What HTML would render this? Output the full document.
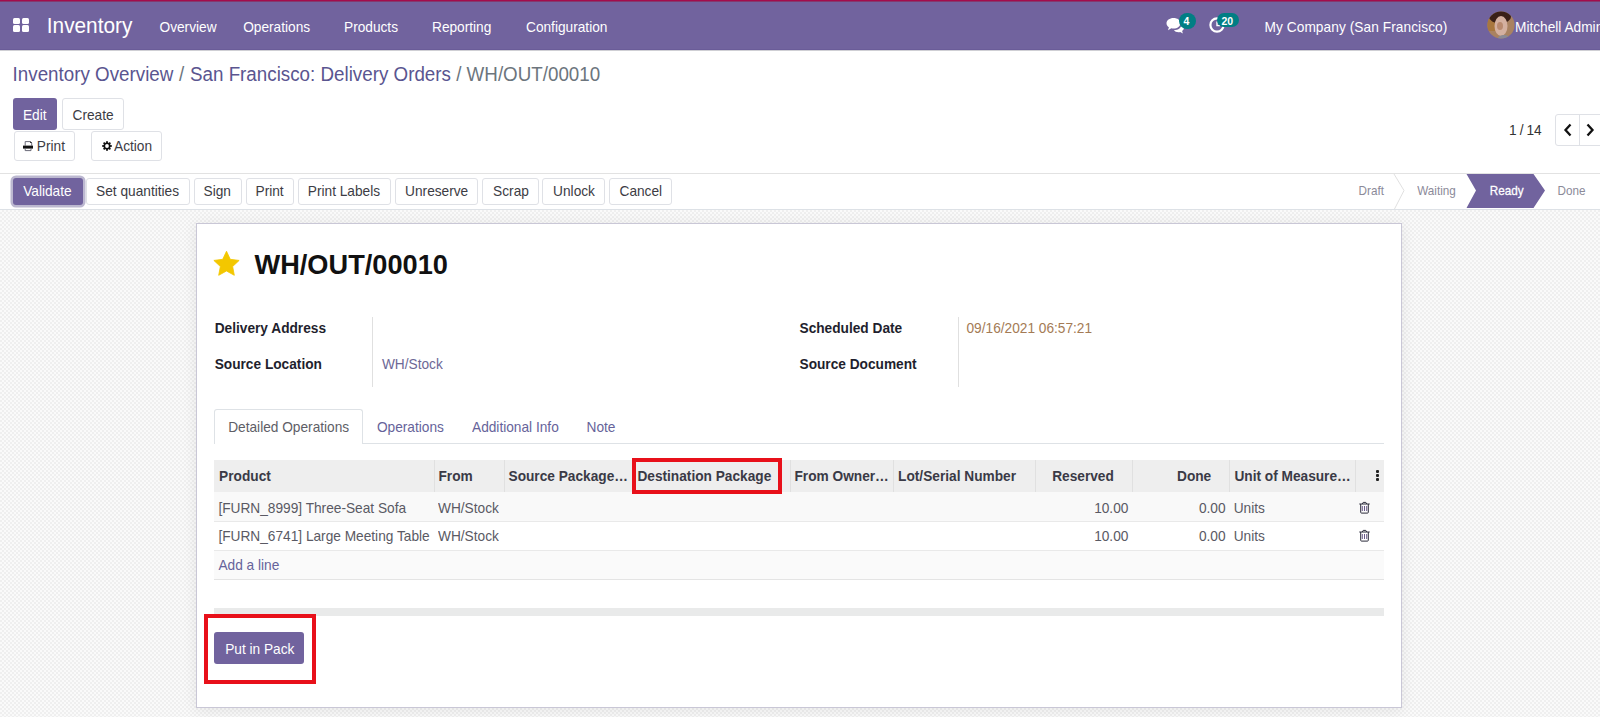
<!DOCTYPE html>
<html><head><meta charset="utf-8">
<style>
*{box-sizing:border-box;margin:0;padding:0}
html,body{width:1600px;height:717px;overflow:hidden;background:#fff;font-family:"Liberation Sans",sans-serif;font-size:14px;color:#212529}
.abs{position:absolute}
.t{position:absolute;white-space:nowrap;line-height:1}
</style></head><body>
<div class="abs" style="left:0px;top:0px;width:1600px;height:50px;background:#71639e"></div>
<div class="abs" style="left:0px;top:0px;width:1600px;height:1px;background:#a30c4c"></div>
<div class="abs" style="left:0px;top:1px;width:1600px;height:1px;background:#84396e"></div>
<div class="abs" style="left:0px;top:49px;width:1600px;height:1px;background:#6a5c98"></div>
<div class="abs" style="left:0px;top:50px;width:1600px;height:1px;background:#cfcfd4"></div>
<div class="abs" style="left:12.5px;top:17.7px;width:7.6px;height:6.6px;background:#fff;border-radius:1.5px"></div>
<div class="abs" style="left:21.8px;top:17.7px;width:7.6px;height:6.6px;background:#fff;border-radius:1.5px"></div>
<div class="abs" style="left:12.5px;top:25px;width:7.6px;height:6.6px;background:#fff;border-radius:1.5px"></div>
<div class="abs" style="left:21.8px;top:25px;width:7.6px;height:6.6px;background:#fff;border-radius:1.5px"></div>
<div class="t" style="left:46.8px;top:16.29px;font-size:20.8px;color:#fff;transform-origin:0 17.61px;;transform:scaleY(1.035)">Inventory</div>
<div class="t" style="left:159.5px;top:20.50px;font-size:13.7px;color:#fff;transform-origin:0 11.60px;;transform:scaleY(1.12)">Overview</div>
<div class="t" style="left:243.2px;top:20.50px;font-size:13.7px;color:#fff;transform-origin:0 11.60px;;transform:scaleY(1.12)">Operations</div>
<div class="t" style="left:344.0px;top:20.50px;font-size:13.7px;color:#fff;transform-origin:0 11.60px;;transform:scaleY(1.12)">Products</div>
<div class="t" style="left:432.0px;top:20.50px;font-size:13.7px;color:#fff;transform-origin:0 11.60px;;transform:scaleY(1.12)">Reporting</div>
<div class="t" style="left:526.0px;top:20.50px;font-size:13.7px;color:#fff;transform-origin:0 11.60px;;transform:scaleY(1.12)">Configuration</div>
<div class="t" style="left:1264.5px;top:20.50px;font-size:13.7px;color:#fff;transform-origin:0 11.60px;letter-spacing:.07px;transform:scaleY(1.12)">My Company (San Francisco)</div>
<div class="t" style="left:1515px;top:20.50px;font-size:13.7px;color:#fff;transform-origin:0 11.60px;;transform:scaleY(1.12)">Mitchell Admin</div>
<svg class="abs" style="left:1487px;top:10.5px" width="28" height="28" viewBox="0 0 28 28"><defs><clipPath id="av"><circle cx="14" cy="14" r="13.6"/></clipPath></defs><g clip-path="url(#av)"><rect width="28" height="28" fill="#a98261"/><rect x="0" y="8" width="9" height="12" fill="#a8773e"/><ellipse cx="13" cy="6" rx="11" ry="6.5" fill="#3a2018"/><ellipse cx="14" cy="15" rx="6.5" ry="10" fill="#d4b0a0"/><ellipse cx="13" cy="15" rx="3" ry="4" fill="#b98a70"/><ellipse cx="17" cy="27" rx="6" ry="3" fill="#8a8a95"/></g></svg>
<svg class="abs" style="left:1166px;top:17px" width="19" height="17" viewBox="0 0 19 17"><path d="M7.5 1C3.6 1 .5 3.3 .5 6.2c0 1.6.9 3 2.4 4L2 13.2l3.3-2c.7.2 1.4.3 2.2.3 3.9 0 7-2.3 7-5.3S11.4 1 7.5 1z" fill="#fff"/><path d="M15.5 7.5c0 3-3 5.6-7.6 5.7.9 1.2 2.6 2 4.6 2 .6 0 1.1-.1 1.7-.2l2.7 1.6-.8-2.6c1.2-.8 1.9-1.9 1.9-3.2 0-1.3-.9-2.5-2.3-3.3z" fill="#fff"/></svg>
<div class="abs" style="left:1179px;top:13.4px;width:17px;height:15.2px;border-radius:8px;background:#017e84"></div>
<div class="t" style="left:1183.5px;top:16.21px;font-size:10.5px;color:#fff;font-weight:bold;transform-origin:0 8.89px;;transform:scaleY(1.05)">4</div>
<svg class="abs" style="left:1209px;top:17px" width="16" height="16" viewBox="0 0 16 16"><circle cx="8" cy="8" r="6.6" fill="none" stroke="#fff" stroke-width="2.2"/><path d="M8 4.5V8.6H11" stroke="#fff" stroke-width="1.4" fill="none"/></svg>
<div class="abs" style="left:1217.4px;top:13.4px;width:21.3px;height:13.5px;border-radius:7px;background:#017e84"></div>
<div class="t" style="left:1221.5px;top:15.71px;font-size:10.5px;color:#fff;font-weight:bold;transform-origin:0 8.89px;;transform:scaleY(1.05)">20</div>
<div class="t" style="left:12.6px;top:65.89px;font-size:18.8px;color:#5a5590;transform-origin:0 15.91px;;transform:scaleY(1.04)">Inventory Overview<span style="color:#6c757d;padding:0 .5px"> / </span>San Francisco: Delivery Orders<span style="color:#6c757d"> / WH/OUT/00010</span></div>
<div class="abs" style="left:13px;top:98px;width:44px;height:32px;background:#71639e;border-radius:3px;"></div>
<div class="t" style="left:22.9px;top:108.70px;font-size:13.7px;color:#fff;transform-origin:0 11.60px;;transform:scaleY(1.12)">Edit</div>
<div class="abs" style="left:62.4px;top:98px;width:61.300000000000004px;height:32px;background:#fff;border:1px solid #dfe1e6;border-radius:3px;"></div>
<div class="t" style="left:72.5px;top:108.70px;font-size:13.7px;color:#3c3c44;transform-origin:0 11.60px;;transform:scaleY(1.12)">Create</div>
<div class="abs" style="left:13.5px;top:130.7px;width:61.0px;height:30.700000000000017px;background:#fff;border:1px solid #dfe1e6;border-radius:3px;"></div>
<svg class="abs" style="left:22px;top:140px" width="12" height="12" viewBox="0 0 12 12"><path d="M3.2 5.6V1.6h5.2l1.3 1.3v2.7" fill="none" stroke="#5a5a6a" stroke-width=".9"/><path d="M8.2 1.3l1.8 1.8h-1.8z" fill="#111"/><rect x="1" y="5.6" width="10" height="3" fill="#111"/><path d="M3.2 8.6v2h5.8v-2" fill="none" stroke="#5a5a6a" stroke-width=".9"/></svg>
<div class="t" style="left:36.8px;top:139.80px;font-size:13.7px;color:#3c3c44;transform-origin:0 11.60px;;transform:scaleY(1.12)">Print</div>
<div class="abs" style="left:91.3px;top:130.7px;width:71.2px;height:30.700000000000017px;background:#fff;border:1px solid #dfe1e6;border-radius:3px;"></div>
<svg class="abs" style="left:101.5px;top:141px" width="10" height="10" viewBox="-5 -5 10 10"><g fill="#111"><circle r="3.5"/><rect x="-.9" y="-4.8" width="1.8" height="9.6"/><rect x="-.9" y="-4.8" width="1.8" height="9.6" transform="rotate(45)"/><rect x="-.9" y="-4.8" width="1.8" height="9.6" transform="rotate(90)"/><rect x="-.9" y="-4.8" width="1.8" height="9.6" transform="rotate(135)"/></g><circle r="1.9" fill="#fff"/></svg>
<div class="t" style="left:114.0px;top:139.80px;font-size:13.7px;color:#3c3c44;transform-origin:0 11.60px;;transform:scaleY(1.12)">Action</div>
<div class="t" style="left:1509px;top:123.90px;font-size:13.7px;color:#333;transform-origin:0 11.60px;letter-spacing:-.35px;transform:scaleY(1.12)">1 / 14</div>
<div class="abs" style="left:1555px;top:114px;width:60px;height:32px;background:#fff;border:1px solid #dfe1e6;border-radius:3px"></div>
<div class="abs" style="left:1579px;top:114px;width:1px;height:32px;background:#dfe1e6"></div>
<svg class="abs" style="left:1563px;top:123px" width="10" height="14" viewBox="0 0 10 14"><path d="M7.5 1.5L2.5 7l5 5.5" fill="none" stroke="#111" stroke-width="2.3"/></svg>
<svg class="abs" style="left:1585px;top:123px" width="10" height="14" viewBox="0 0 10 14"><path d="M2.5 1.5L7.5 7l-5 5.5" fill="none" stroke="#111" stroke-width="2.3"/></svg>
<div class="abs" style="left:0px;top:173px;width:1600px;height:1px;background:#e2e2e2"></div>
<div class="abs" style="left:0px;top:209px;width:1600px;height:1px;background:#dde1e6"></div>
<div class="abs" style="left:13px;top:178px;width:70px;height:27px;background:#71639e;border-radius:3px;box-shadow:0 0 0 2.5px #bcb8d0"></div>
<div class="t" style="left:23.2px;top:185.00px;font-size:13.7px;color:#fff;transform-origin:0 11.60px;;transform:scaleY(1.12)">Validate</div>
<div class="abs" style="left:86px;top:178px;width:104px;height:27px;background:#fff;border:1px solid #dfe1e6;border-radius:3px;"></div>
<div class="t" style="left:96.1px;top:185.00px;font-size:13.7px;color:#3c3c44;transform-origin:0 11.60px;;transform:scaleY(1.12)">Set quantities</div>
<div class="abs" style="left:194px;top:178px;width:48px;height:27px;background:#fff;border:1px solid #dfe1e6;border-radius:3px;"></div>
<div class="t" style="left:203.5px;top:185.00px;font-size:13.7px;color:#3c3c44;transform-origin:0 11.60px;;transform:scaleY(1.12)">Sign</div>
<div class="abs" style="left:246px;top:178px;width:48px;height:27px;background:#fff;border:1px solid #dfe1e6;border-radius:3px;"></div>
<div class="t" style="left:255.5px;top:185.00px;font-size:13.7px;color:#3c3c44;transform-origin:0 11.60px;;transform:scaleY(1.12)">Print</div>
<div class="abs" style="left:298px;top:178px;width:93px;height:27px;background:#fff;border:1px solid #dfe1e6;border-radius:3px;"></div>
<div class="t" style="left:307.8px;top:185.00px;font-size:13.7px;color:#3c3c44;transform-origin:0 11.60px;;transform:scaleY(1.12)">Print Labels</div>
<div class="abs" style="left:395px;top:178px;width:83px;height:27px;background:#fff;border:1px solid #dfe1e6;border-radius:3px;"></div>
<div class="t" style="left:405.1px;top:185.00px;font-size:13.7px;color:#3c3c44;transform-origin:0 11.60px;;transform:scaleY(1.12)">Unreserve</div>
<div class="abs" style="left:482px;top:178px;width:57px;height:27px;background:#fff;border:1px solid #dfe1e6;border-radius:3px;"></div>
<div class="t" style="left:493.1px;top:185.00px;font-size:13.7px;color:#3c3c44;transform-origin:0 11.60px;;transform:scaleY(1.12)">Scrap</div>
<div class="abs" style="left:542px;top:178px;width:63px;height:27px;background:#fff;border:1px solid #dfe1e6;border-radius:3px;"></div>
<div class="t" style="left:553.1px;top:185.00px;font-size:13.7px;color:#3c3c44;transform-origin:0 11.60px;;transform:scaleY(1.12)">Unlock</div>
<div class="abs" style="left:609px;top:178px;width:63px;height:27px;background:#fff;border:1px solid #dfe1e6;border-radius:3px;"></div>
<div class="t" style="left:619.5px;top:185.00px;font-size:13.7px;color:#3c3c44;transform-origin:0 11.60px;;transform:scaleY(1.12)">Cancel</div>
<svg class="abs" style="left:1380px;top:174px" width="220" height="35" viewBox="0 0 220 35"><path d="M14 0L24 16.5L14.5 35" fill="none" stroke="#e0e0e0" stroke-width="1"/><path d="M86.5 0H153.5L165 16.5L153.5 34H86.5L96 16.5Z" fill="#71639e"/></svg>
<div class="t" style="left:1358.6px;top:184.80px;font-size:11.7px;color:#8b8a99;transform-origin:0 9.90px;;transform:scaleY(1.12)">Draft</div>
<div class="t" style="left:1417.2px;top:184.80px;font-size:11.7px;color:#8b8a99;transform-origin:0 9.90px;;transform:scaleY(1.12)">Waiting</div>
<div class="t" style="left:1489.8px;top:184.80px;font-size:11.7px;color:#fff;transform-origin:0 9.90px;-webkit-text-stroke:.25px #fff;transform:scaleY(1.12)">Ready</div>
<div class="t" style="left:1557.6px;top:184.80px;font-size:11.7px;color:#8b8a99;transform-origin:0 9.90px;;transform:scaleY(1.12)">Done</div>
<div class="abs" style="left:0px;top:210px;width:1600px;height:507px;background-color:#fafafa;background-image:linear-gradient(45deg,#efefef 25%,transparent 25%,transparent 75%,#efefef 75%),linear-gradient(45deg,#efefef 25%,transparent 25%,transparent 75%,#efefef 75%);background-size:4px 4px;background-position:0 0,2px 2px"></div>
<div class="abs" style="left:196px;top:223px;width:1206px;height:485px;background:#fff;border:1px solid #c9c7d6;box-shadow:0 2px 14px rgba(0,0,0,.08)"></div>
<svg class="abs" style="left:213.3px;top:249.8px" width="27" height="27" viewBox="0 0 26 26"><path d="M13.00 1.20L16.64 8.98L25.17 10.04L18.90 15.92L20.52 24.36L13.00 20.20L5.48 24.36L7.10 15.92L0.83 10.04L9.36 8.98Z" fill="#f3c700" stroke="#f3c700" stroke-width=".8" stroke-linejoin="round"/></svg>
<div class="t" style="left:254.5px;top:250.88px;font-size:27.2px;color:#111;font-weight:bold;">WH/OUT/00010</div>
<div class="t" style="left:214.7px;top:322.20px;font-size:13.7px;color:#1f1f2e;font-weight:bold;transform-origin:0 11.60px;;transform:scaleY(1.12)">Delivery Address</div>
<div class="t" style="left:214.7px;top:357.80px;font-size:13.7px;color:#1f1f2e;font-weight:bold;transform-origin:0 11.60px;;transform:scaleY(1.12)">Source Location</div>
<div class="abs" style="left:372px;top:317.4px;width:1px;height:70px;background:#e0e0e0"></div>
<div class="t" style="left:381.9px;top:357.80px;font-size:13.7px;color:#6d6896;transform-origin:0 11.60px;;transform:scaleY(1.12)">WH/Stock</div>
<div class="t" style="left:799.5px;top:322.20px;font-size:13.7px;color:#1f1f2e;font-weight:bold;transform-origin:0 11.60px;;transform:scaleY(1.12)">Scheduled Date</div>
<div class="t" style="left:799.5px;top:357.80px;font-size:13.7px;color:#1f1f2e;font-weight:bold;transform-origin:0 11.60px;;transform:scaleY(1.12)">Source Document</div>
<div class="abs" style="left:957.5px;top:317.4px;width:1px;height:70px;background:#e0e0e0"></div>
<div class="t" style="left:966.5px;top:322.20px;font-size:13.7px;color:#a47b55;transform-origin:0 11.60px;;transform:scaleY(1.12)">09/16/2021 06:57:21</div>
<div class="abs" style="left:214px;top:443px;width:1170px;height:1px;background:#dee2e6"></div>
<div class="abs" style="left:214px;top:409px;width:149px;height:35px;background:#fff;border:1px solid #dee2e6;border-bottom:none;border-radius:3px 3px 0 0"></div>
<div class="t" style="left:228.2px;top:420.70px;font-size:13.7px;color:#5e5e66;transform-origin:0 11.60px;;transform:scaleY(1.12)">Detailed Operations</div>
<div class="t" style="left:376.9px;top:420.70px;font-size:13.7px;color:#66639a;transform-origin:0 11.60px;;transform:scaleY(1.12)">Operations</div>
<div class="t" style="left:472px;top:420.70px;font-size:13.7px;color:#66639a;transform-origin:0 11.60px;;transform:scaleY(1.12)">Additional Info</div>
<div class="t" style="left:586.5px;top:420.70px;font-size:13.7px;color:#66639a;transform-origin:0 11.60px;;transform:scaleY(1.12)">Note</div>
<div class="abs" style="left:214px;top:460px;width:1170px;height:32px;background:#eeeeee"></div>
<div class="abs" style="left:434px;top:460px;width:1px;height:32px;background:#e0e0e0"></div>
<div class="abs" style="left:504px;top:460px;width:1px;height:32px;background:#e0e0e0"></div>
<div class="abs" style="left:632px;top:460px;width:1px;height:32px;background:#e0e0e0"></div>
<div class="abs" style="left:789.5px;top:460px;width:1px;height:32px;background:#e0e0e0"></div>
<div class="abs" style="left:893px;top:460px;width:1px;height:32px;background:#e0e0e0"></div>
<div class="abs" style="left:1035px;top:460px;width:1px;height:32px;background:#e0e0e0"></div>
<div class="abs" style="left:1132px;top:460px;width:1px;height:32px;background:#e0e0e0"></div>
<div class="abs" style="left:1229px;top:460px;width:1px;height:32px;background:#e0e0e0"></div>
<div class="abs" style="left:1355px;top:460px;width:1px;height:32px;background:#e0e0e0"></div>
<div class="t" style="left:219.1px;top:469.60px;font-size:13.7px;color:#3a3a46;font-weight:bold;transform-origin:0 11.60px;;transform:scaleY(1.12)">Product</div>
<div class="t" style="left:438.5px;top:469.60px;font-size:13.7px;color:#3a3a46;font-weight:bold;transform-origin:0 11.60px;;transform:scaleY(1.12)">From</div>
<div class="t" style="left:508.5px;top:469.60px;font-size:13.7px;color:#3a3a46;font-weight:bold;transform-origin:0 11.60px;;transform:scaleY(1.12)">Source Package…</div>
<div class="t" style="left:637.4px;top:469.60px;font-size:13.7px;color:#3a3a46;font-weight:bold;transform-origin:0 11.60px;;transform:scaleY(1.12)">Destination Package</div>
<div class="t" style="left:794.5px;top:469.60px;font-size:13.7px;color:#3a3a46;font-weight:bold;transform-origin:0 11.60px;;transform:scaleY(1.12)">From Owner…</div>
<div class="t" style="left:898.1px;top:469.60px;font-size:13.7px;color:#3a3a46;font-weight:bold;transform-origin:0 11.60px;;transform:scaleY(1.12)">Lot/Serial Number</div>
<div class="t" style="left:1052.2px;top:469.60px;font-size:13.7px;color:#3a3a46;font-weight:bold;transform-origin:0 11.60px;;transform:scaleY(1.12)">Reserved</div>
<div class="t" style="left:1177.0px;top:469.60px;font-size:13.7px;color:#3a3a46;font-weight:bold;transform-origin:0 11.60px;;transform:scaleY(1.12)">Done</div>
<div class="t" style="left:1234.4px;top:469.60px;font-size:13.7px;color:#3a3a46;font-weight:bold;transform-origin:0 11.60px;;transform:scaleY(1.12)">Unit of Measure…</div>
<div class="abs" style="left:1376px;top:470px;width:3px;height:3px;background:#222;border-radius:1px"></div>
<div class="abs" style="left:1376px;top:474px;width:3px;height:3px;background:#222;border-radius:1px"></div>
<div class="abs" style="left:1376px;top:478px;width:3px;height:3px;background:#222;border-radius:1px"></div>
<div class="abs" style="left:214px;top:492.2px;width:1170px;height:29.2px;background:#f9f9f9"></div>
<div class="abs" style="left:214px;top:521.4px;width:1170px;height:1px;background:#e8e8e8"></div>
<div class="abs" style="left:214px;top:550.2px;width:1170px;height:29px;background:#fafafa"></div>
<div class="abs" style="left:214px;top:521.4px;width:1170px;height:1px;background:#e9e9e9"></div>
<div class="abs" style="left:214px;top:550.2px;width:1170px;height:1px;background:#e9e9e9"></div>
<div class="abs" style="left:214px;top:579.2px;width:1170px;height:1px;background:#e4e4e4"></div>
<div class="t" style="left:218.4px;top:501.50px;font-size:13.7px;color:#5a5a64;transform-origin:0 11.60px;;transform:scaleY(1.12)">[FURN_8999] Three-Seat Sofa</div>
<div class="t" style="left:438.0px;top:501.50px;font-size:13.7px;color:#5a5a64;transform-origin:0 11.60px;;transform:scaleY(1.12)">WH/Stock</div>
<div class="t" style="left:218.4px;top:529.90px;font-size:13.7px;color:#5a5a64;transform-origin:0 11.60px;;transform:scaleY(1.12)">[FURN_6741] Large Meeting Table</div>
<div class="t" style="left:438.0px;top:529.90px;font-size:13.7px;color:#5a5a64;transform-origin:0 11.60px;;transform:scaleY(1.12)">WH/Stock</div>
<div class="t" style="left:1128.4px;top:501.50px;font-size:13.7px;color:#5a5a64;transform-origin:0 11.60px;transform:translateX(-100%) scaleY(1.12)">10.00</div>
<div class="t" style="left:1225.6px;top:501.50px;font-size:13.7px;color:#5a5a64;transform-origin:0 11.60px;transform:translateX(-100%) scaleY(1.12)">0.00</div>
<div class="t" style="left:1233.7px;top:501.50px;font-size:13.7px;color:#5a5a64;transform-origin:0 11.60px;;transform:scaleY(1.12)">Units</div>
<svg class="abs" style="left:1359px;top:500.8px" width="11" height="13" viewBox="0 0 11 13"><path d="M.3 3h10.4M3.3 3l.9-1.6h2.6L7.7 3M1.7 3v8.3q0 .8.8.8h6q.8 0 .8-.8V3" fill="none" stroke="#2a2a3a" stroke-width="1"/><path d="M3.3 5v5M5.5 5v5M7.7 5v5" stroke="#6a5a8a" stroke-width="1"/></svg>
<div class="t" style="left:1128.4px;top:529.90px;font-size:13.7px;color:#5a5a64;transform-origin:0 11.60px;transform:translateX(-100%) scaleY(1.12)">10.00</div>
<div class="t" style="left:1225.6px;top:529.90px;font-size:13.7px;color:#5a5a64;transform-origin:0 11.60px;transform:translateX(-100%) scaleY(1.12)">0.00</div>
<div class="t" style="left:1233.7px;top:529.90px;font-size:13.7px;color:#5a5a64;transform-origin:0 11.60px;;transform:scaleY(1.12)">Units</div>
<svg class="abs" style="left:1359px;top:529.2px" width="11" height="13" viewBox="0 0 11 13"><path d="M.3 3h10.4M3.3 3l.9-1.6h2.6L7.7 3M1.7 3v8.3q0 .8.8.8h6q.8 0 .8-.8V3" fill="none" stroke="#2a2a3a" stroke-width="1"/><path d="M3.3 5v5M5.5 5v5M7.7 5v5" stroke="#6a5a8a" stroke-width="1"/></svg>
<div class="t" style="left:218.4px;top:558.70px;font-size:13.7px;color:#66639a;transform-origin:0 11.60px;;transform:scaleY(1.12)">Add a line</div>
<div class="abs" style="left:213.8px;top:607.8px;width:1170.2px;height:8px;background:#e9eaea"></div>
<div class="abs" style="left:214.1px;top:632.4px;width:90.4px;height:31.600000000000023px;background:#71639e;border-radius:3px;"></div>
<div class="t" style="left:225.2px;top:642.50px;font-size:13.7px;color:#fff;transform-origin:0 11.60px;;transform:scaleY(1.12)">Put in Pack</div>
<div class="abs" style="left:632.3px;top:457.9px;width:149.5px;height:36.1px;border:4px solid #e8101a"></div>
<div class="abs" style="left:204.1px;top:613.8px;width:111.9px;height:70px;border:4px solid #e8101a"></div>
</body></html>
